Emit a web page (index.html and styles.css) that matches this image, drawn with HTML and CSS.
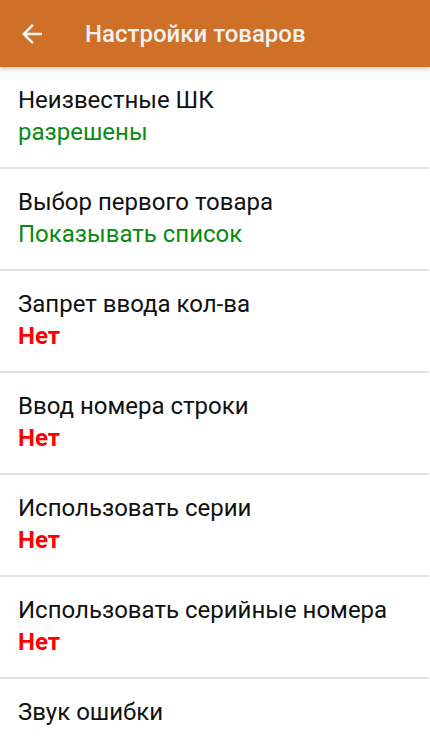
FILE: index.html
```
<!DOCTYPE html>
<html lang="ru">
<head>
  <meta charset="UTF-8">
  <title>Настройки товаров</title>
  <link rel="stylesheet" href="styles.css">
</head>
<body>
  <header class="topbar">
    <span class="back">
      <svg width="20" height="20" viewBox="0 0 16 16"><path d="M16 7H3.83l5.59-5.59L8 0 0 8l8 8 1.41-1.41L3.83 9H16z" fill="#f4f4f4"/></svg>
    </span>
    <h1>Настройки товаров</h1>
  </header>

  <ul class="settings">
    <li><div class="name">Неизвестные ШК</div><div class="val ok">разрешены</div></li>
    <li><div class="name">Выбор первого товара</div><div class="val ok">Показывать список</div></li>
    <li><div class="name">Запрет ввода кол-ва</div><div class="val no">Нет</div></li>
    <li><div class="name">Ввод номера строки</div><div class="val no">Нет</div></li>
    <li><div class="name">Использовать серии</div><div class="val no">Нет</div></li>
    <li><div class="name">Использовать серийные номера</div><div class="val no">Нет</div></li>
    <li><div class="name">Звук ошибки</div></li>
  </ul>
</body>
</html>
```

FILE: styles.css
```
html, body { margin: 0; padding: 0; }
body { font-family: Roboto, "Noto Sans", sans-serif; background: #fff; overflow: hidden; height: 739px; }
.topbar { height: 67px; background: #cf7029; display: flex; align-items: center; box-shadow: 0 2px 4px rgba(0,0,0,0.22); position: relative; z-index: 1; }
.back { width: 85px; display: flex; padding-left: 22px; box-sizing: border-box; }
.back svg { display: block; }
.topbar h1 { margin: 0; font-size: 24px; font-weight: 500; color: #f2f2f2; }
.settings { list-style: none; margin: 0; padding: 0; }
.settings li { padding: 17px 18px 19px; border-bottom: 2px solid #e3e3e3; margin-right: 1px; }
.settings li:last-child { border-bottom: 0; }
.name, .val { font-size: 24px; line-height: 32px; white-space: nowrap; }
.name { color: #111; }
.ok { color: #0a8a12; }
.no { color: #ff0000; font-weight: 700; }
```
